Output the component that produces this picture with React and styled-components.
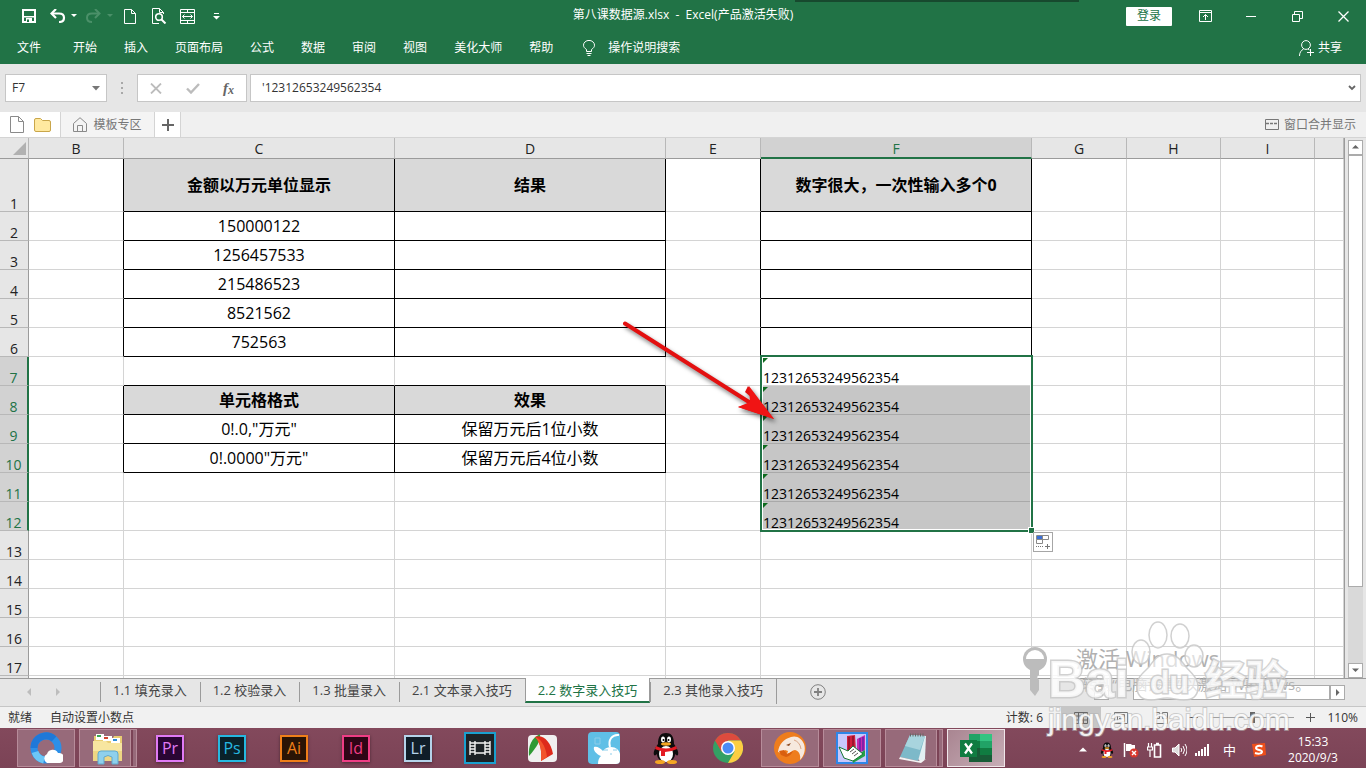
import styled, { createGlobalStyle, css } from "styled-components";

const columns = [
  { id: "B", width: 95 },
  { id: "C", width: 271 },
  { id: "D", width: 271 },
  { id: "E", width: 95 },
  { id: "F", width: 271, active: true },
  { id: "G", width: 95 },
  { id: "H", width: 94 },
  { id: "I", width: 94 },
  { id: "" },
];

const LONG_NUMBER = "12312653249562354";

const cells = {
  C1: "金额以万元单位显示",
  D1: "结果",
  F1: "数字很大，一次性输入多个0",
  C2: "150000122",
  C3: "1256457533",
  C4: "215486523",
  C5: "8521562",
  C6: "752563",
  C8: "单元格格式",
  D8: "效果",
  C9: '0!.0,"万元"',
  D9: "保留万元后1位小数",
  C10: '0!.0000"万元"',
  D10: "保留万元后4位小数",
};

const rows = Array.from({ length: 17 }, (_, i) => i + 1);
const ribbonTabs = ["开始", "插入", "页面布局", "公式", "数据", "审阅", "视图", "美化大师", "帮助"];
const sheets = [
  "1.1 填充录入",
  "1.2 校验录入",
  "1.3 批量录入",
  "2.1 文本录入技巧",
  "2.2 数字录入技巧",
  "2.3 其他录入技巧",
];
const activeSheet = 4;

// tables with black borders: C1:D6, C8:D10 and F1:F6
const isBoxed = (col, row) => {
  if (col === "C" || col === "D") return row <= 6 || (row >= 8 && row <= 10);
  return col === "F" && row <= 6;
};

const isSelected = (row) => row >= 7 && row <= 12;

function Cell({ index, row }) {
  const col = columns[index].id;
  const next = columns[index + 1]?.id;
  const selected = col === "F" && isSelected(row);
  return (
    <Td
      $head={isBoxed(col, row) && (row === 1 || row === 8)}
      $right={isBoxed(col, row) || isBoxed(next, row)}
      $bottom={isBoxed(col, row) || isBoxed(col, row + 1)}
      $selected={selected}
      $shaded={selected && row !== 7}
    >
      {selected ? LONG_NUMBER : cells[col + row]}
      {selected && row === 7 && (
        <Selection>
          <FillHandle />
          <PasteOptions aria-label="自动填充选项">
            <svg width="18" height="18" viewBox="0 0 18 18" fill="none">
              <path d="M2.500 2.500h12v4h-12zM8.500 2.500v4M2.500 6.500v4h6v-4" stroke="#888" />
              <path d="M3 3h5v3H3z" fill="#3c6fd6" />
              <path d="M2 13.500h7M2 15.500h0" stroke="#777" strokeDasharray="1 1" />
              <path d="M11 13.500h5M13.500 11v5" stroke="#777" />
            </svg>
          </PasteOptions>
        </Selection>
      )}
    </Td>
  );
}

function Grid() {
  return (
    <Table>
      <colgroup>
        <HeadCol />
        {columns.map((c) => (
          <Col key={c.id} $width={c.width} />
        ))}
      </colgroup>
      <thead>
        <tr>
          <ColHead aria-label="全选">
            <Corner width="14" height="14" viewBox="0 0 14 14">
              <path d="M14 0v13H1z" fill="#b1b1b1" />
            </Corner>
          </ColHead>
          {columns.map((c) => (
            <ColHead key={c.id} $active={c.active}>
              {c.id}
            </ColHead>
          ))}
        </tr>
      </thead>
      <tbody>
        {rows.map((row) => (
          <Row key={row} $tall={row === 1}>
            <RowHead $active={isSelected(row)}>{row}</RowHead>
            {columns.map((c, i) => (
              <Cell key={c.id} index={i} row={row} />
            ))}
          </Row>
        ))}
        <Row>
          <RowHead />
          {columns.map((c) => (
            <Td key={c.id} />
          ))}
        </Row>
      </tbody>
    </Table>
  );
}

function QuickAccess() {
  return (
    <QuickBar>
      <QuickButton aria-label="保存" $w={22}>
        <svg width="14" height="14" viewBox="0 0 14 14">
          <path d="M1 1h12v12H1z" fill="none" stroke="#fff" strokeWidth="2" />
          <path d="M1 7h12v1.500H1zM4 9h6v4H4z" fill="#fff" />
          <path d="M5 10.500h2V13H5z" fill="#217346" />
        </svg>
      </QuickButton>
      <QuickButton aria-label="撤消" $w={46}>
        <svg width="27" height="14" viewBox="0 0 27 14" fill="none">
          <path d="M2 4.500h7c3 0 5 1.600 5 4.200S12 13 9 13" stroke="#fff" strokeWidth="2.200" />
          <path d="M6 0 1.500 4.500 6 9" stroke="#fff" strokeWidth="2.200" />
          <path d="M21 5h6l-3 3z" fill="#fff" />
        </svg>
      </QuickButton>
      <QuickButton aria-label="恢复" $w={26}>
        <svg width="27" height="14" viewBox="0 0 27 14" fill="none">
          <path d="M13 4.500H6c-3 0-5 1.600-5 4.200S3 13 6 13" stroke="#4b9069" strokeWidth="2" />
          <path d="m9 0 4.500 4.500L9 9" stroke="#4b9069" strokeWidth="2" />
          <path d="M21 5h6l-3 3z" fill="#4b9069" />
        </svg>
      </QuickButton>
      <QuickButton aria-label="新建" $w={35}>
        <svg width="12" height="15" viewBox="0 0 12 15" fill="none" stroke="#fff">
          <path d="M.5.5h7l4 4v10H.5zM7.500.5v4h4" />
        </svg>
      </QuickButton>
      <QuickButton aria-label="打印预览" $w={25}>
        <svg width="15" height="16" viewBox="0 0 15 16" fill="none" stroke="#fff">
          <path d="M7 15.500H.5V.5h7l4 4V6M7.500.5v4h4" />
          <circle cx="7" cy="9" r="3.300" strokeWidth="1.600" />
          <path d="m9.500 11.500 4 4" strokeWidth="2" />
        </svg>
      </QuickButton>
      <QuickButton aria-label="表格" $w={31}>
        <svg width="15" height="15" viewBox="0 0 15 15" fill="none" stroke="#fff">
          <path d="M.5.5h14v14H.5zM.5 3.500h14M.5 11.500h14M7.500.5v3M7.500 11.500v3M2.500 7.500h10M4.500 5.500l-2 2 2 2M10.500 5.500l2 2-2 2" />
        </svg>
      </QuickButton>
      <QuickButton aria-label="自定义快速访问工具栏" $w={27}>
        <svg width="7" height="7" viewBox="0 0 7 7" fill="#fff">
          <path d="M1 0h5v1H1zM0 3h7L3.500 6.500z" />
        </svg>
      </QuickButton>
    </QuickBar>
  );
}

function Header() {
  return (
    <HeaderBar>
      <WindowEdge />
      <TitleRow>
        <QuickAccess />
        <Title>{"第八课数据源.xlsx  -  Excel(产品激活失败)"}</Title>
        <WindowButtons>
          <LoginButton>登录</LoginButton>
          <WindowButton aria-label="功能区显示选项">
            <svg width="13" height="12" viewBox="0 0 13 12" fill="none" stroke="#fff">
              <path d="M.5.5h12v11H.5zM.5 2.500h12M6.500 10V4.500M4 7l2.500-2.500L9 7" />
            </svg>
          </WindowButton>
          <WindowButton aria-label="最小化">
            <svg width="10" height="11" viewBox="0 0 10 11" stroke="#fff">
              <path d="M0 5.500h10" />
            </svg>
          </WindowButton>
          <WindowButton aria-label="向下还原">
            <svg width="11" height="11" viewBox="0 0 11 11" fill="none" stroke="#fff">
              <path d="M.5 3.500h7v7h-7zM2.500 3V.5h8v7H8" />
            </svg>
          </WindowButton>
          <WindowButton aria-label="关闭">
            <svg width="11" height="11" viewBox="0 0 11 11" stroke="#fff" strokeWidth="1.300">
              <path d="m.5.5 10 10M10.500.5l-10 10" />
            </svg>
          </WindowButton>
        </WindowButtons>
      </TitleRow>
      <RibbonRow>
        <RibbonTab $file>文件</RibbonTab>
        {ribbonTabs.map((t) => (
          <RibbonTab key={t}>{t}</RibbonTab>
        ))}
        <TellMe>
          <svg width="12" height="16" viewBox="0 0 12 16" fill="none" stroke="#fff">
            <path d="M3.500 11.500v-2C1.500 8 .5 7 .5 5.200a5.400 4.700 0 0 1 11 0c0 1.800-1 2.800-3 4.300v2zM3.500 13.500h5M4.500 15.500h3" />
          </svg>
          操作说明搜索
        </TellMe>
        <ShareButton>
          <svg width="15" height="16" viewBox="0 0 15 16" fill="none" stroke="#fff">
            <circle cx="7" cy="5" r="4.400" />
            <path d="M.5 16c0-3.500 1.500-5.500 4-7M9 9l1.500 1M8 12.500h7M11.500 9v7" />
          </svg>
          共享
        </ShareButton>
      </RibbonRow>
    </HeaderBar>
  );
}

function FormulaBar() {
  return (
    <FormulaRow>
      <NameBox>
        <NameInput aria-label="名称框" defaultValue="F7" />
        <PlainButton aria-label="名称列表">
          <svg width="8" height="5" viewBox="0 0 8 5" fill="#777">
            <path d="M0 0h8L4 4.500z" />
          </svg>
        </PlainButton>
      </NameBox>
      <Dots width="2" height="12" viewBox="0 0 2 12" fill="#a8a8a8">
        <path d="M0 0h2v2H0zM0 5h2v2H0zM0 10h2v2H0z" />
      </Dots>
      <FormulaTools>
        <PlainButton aria-label="取消">
          <svg width="12" height="11" viewBox="0 0 12 11" stroke="#bcbcbc" strokeWidth="1.800">
            <path d="m1 .5 10 10M11 .5 1 10.500" />
          </svg>
        </PlainButton>
        <PlainButton aria-label="输入">
          <svg width="14" height="11" viewBox="0 0 14 11" fill="none" stroke="#bcbcbc" strokeWidth="2.400">
            <path d="m1 5.500 4 4L13 1" />
          </svg>
        </PlainButton>
        <FxButton aria-label="插入函数">
          f<sub>x</sub>
        </FxButton>
      </FormulaTools>
      <FormulaField>
        <FormulaInput aria-label="编辑栏" defaultValue={"'" + LONG_NUMBER} />
        <PlainButton aria-label="展开编辑栏">
          <svg width="8" height="6" viewBox="0 0 8 6" fill="none" stroke="#666" strokeWidth="1.800">
            <path d="m1 1 3 3 3-3" />
          </svg>
        </PlainButton>
      </FormulaField>
    </FormulaRow>
  );
}

function DocStrip() {
  return (
    <Strip>
      <StripPart $bg="#fff" $w={61} $gap={10}>
        <svg width="14" height="17" viewBox="0 0 14 17" fill="#fff" stroke="#8a8a8a">
          <path d="M.5.5h8l5 5v11H.5zM8.500.5v5h5" />
        </svg>
        <svg width="17" height="14" viewBox="0 0 17 14" fill="#ffe9a0" stroke="#c9a64a">
          <path d="M.5 12V2Q.5.500 2 .5h4.500l2 2H15q1.500 0 1.500 1.500v8q0 1.500-1.500 1.500H2Q.5 13.500.5 12z" />
        </svg>
      </StripPart>
      <StripPart $bg="#f4f4f4" $w={94} $gap={6}>
        <svg width="14" height="15" viewBox="0 0 14 15" fill="none" stroke="#8a8a8a">
          <path d="M.5 6.500 7 .7l6.500 5.800v8H.5zM4.500 14.500v-6h5v6" />
        </svg>
        模板专区
      </StripPart>
      <StripPart $bg="#fff" $w={26}>
        <svg width="12" height="12" viewBox="0 0 12 12" stroke="#666" strokeWidth="2">
          <path d="M0 6h12M6 0v12" />
        </svg>
      </StripPart>
      <MergeView>
        <svg width="14" height="11" viewBox="0 0 14 11" fill="none" stroke="#777">
          <path d="M.5.5h13v10H.5z" />
          <path d="M1 4.500h12" strokeDasharray="3 1" strokeWidth="1.400" />
        </svg>
        窗口合并显示
      </MergeView>
    </Strip>
  );
}

function Arrow() {
  return (
    <ArrowDrawing width="170" height="116" viewBox="0 0 170 116">
      <path d="M8 8.500 132 87" stroke="#e31010" strokeWidth="4" strokeLinecap="round" />
      <path d="m157 104-36-12 13-4 1-5-7-6 3-6z" fill="#e31010" />
      <path d="m157 104-36-12 12-5-1-16z" fill="#f01414" />
    </ArrowDrawing>
  );
}

function Watermark() {
  return (
    <Mark width="290" height="125" viewBox="0 0 290 125">
      <circle cx="15" cy="41" r="12" fill="#bcbcbc" />
      <path d="M6 41a9 9 0 0 1 18 0z" fill="#fff" />
      <path d="M10 51h9v6l-2 2 2 3v10l-4 6-5-6z" fill="#bcbcbc" />
      <MarkText x="56" y="49" $size={22} fill="#b0b0b0">
        激活 Windows
      </MarkText>
      <MarkText x="62" y="72" $size={15} fill="#b2b2b2">
        转到“电脑设置”以激活 Windows。
      </MarkText>
      <g fill="#fff" fillOpacity=".6" stroke="#c8c8c8" strokeOpacity=".85" strokeWidth="1.500">
        <ellipse cx="138" cy="17" rx="9" ry="13" />
        <ellipse cx="160" cy="18" rx="9" ry="12" />
        <ellipse cx="121" cy="34" rx="9" ry="12" />
        <ellipse cx="174" cy="38" rx="9" ry="11" />
        <path d="M147 36c-9 0-14 7-18 13-7 7-12 10-12 20s6 13 14 13c7 0 9-2 16-2s9 2 17 2c9 0 14-4 14-13s-6-13-12-20c-5-7-10-13-19-13z" />
      </g>
      <g fill="#fff" fillOpacity=".8" stroke="#c6c6c6" strokeOpacity=".8">
        <LogoText x="28" y="79" $size={52}>Bai</LogoText>
        <LogoText x="130" y="75" $size={32}>du</LogoText>
        <LogoText x="185" y="77" $size={41}>经验</LogoText>
      </g>
      <UrlText x="28" y="112" fill="#fff" fillOpacity=".9" stroke="#b4b4b4" strokeOpacity=".6">
        jingyan.baidu.com
      </UrlText>
    </Mark>
  );
}

const arrowPaths = {
  up: "M0 4.500h7L3.500 1z",
  down: "M0 1.500h7L3.500 5z",
  left: "M5 0v7L1.500 3.500z",
  right: "M2 0v7l3.500-3.500z",
};

function ScrollArrow({ dir, label }) {
  return (
    <ScrollButton aria-label={label}>
      <svg width="7" height="7" viewBox="0 0 7 7" fill="#666">
        <path d={arrowPaths[dir]} />
      </svg>
    </ScrollButton>
  );
}

function SheetTabs() {
  return (
    <SheetBar>
      <SheetNav>
        <svg width="36" height="8" viewBox="0 0 36 8" fill="#bdbdbd">
          <path d="M5 0v8L1 4zM30 0v8l4-4z" />
        </svg>
      </SheetNav>
      {sheets.map((s, i) => (
        <SheetTab key={s} $active={i === activeSheet} $last={i === sheets.length - 1}>
          {s}
        </SheetTab>
      ))}
      <AddSheet aria-label="新工作表">
        <svg width="16" height="16" viewBox="0 0 16 16" fill="none" stroke="#808080">
          <circle cx="8" cy="8" r="7.300" />
          <path d="M4 8h8M8 4v8" strokeWidth="1.800" />
        </svg>
      </AddSheet>
      <HScroll>
        <ScrollArrow dir="left" label="向左滚动" />
        <HTrack>
          <HThumb />
        </HTrack>
        <ScrollArrow dir="right" label="向右滚动" />
      </HScroll>
    </SheetBar>
  );
}

function StatusBar() {
  return (
    <Status>
      <span>就绪</span>
      <span>自动设置小数点</span>
      <Count>计数: 6</Count>
      <Views>
        <ViewButton aria-label="普通" $active>
          <svg width="14" height="12" viewBox="0 0 14 12" fill="none" stroke="#666">
            <path d="M.5.5h13v11H.5zM.5 4h13M.5 8h13M4.500.5v11M9.500.5v11" />
          </svg>
        </ViewButton>
        <ViewButton aria-label="页面布局">
          <svg width="14" height="12" viewBox="0 0 14 12" fill="none" stroke="#777">
            <path d="M.5.5h13v11H.5zM3.500 2.500h7v7h-7zM5 4.500h4M5 6.500h4" />
          </svg>
        </ViewButton>
        <ViewButton aria-label="分页预览">
          <svg width="14" height="12" viewBox="0 0 14 12" fill="none" stroke="#777">
            <path d="M.5.5h5v6h-5zM8.500.5h5v6h-5zM.5 6.500v5h13v-5" />
          </svg>
        </ViewButton>
        <Zoom>
          <ZoomButton aria-label="缩小">
            <svg width="9" height="9" viewBox="0 0 9 9" stroke="#555">
              <path d="M0 4.500h9" />
            </svg>
          </ZoomButton>
          <ZoomRange type="range" aria-label="缩放" min="10" max="210" defaultValue="110" />
          <ZoomButton aria-label="放大">
            <svg width="9" height="9" viewBox="0 0 9 9" stroke="#555">
              <path d="M0 4.500h9M4.500 0v9" />
            </svg>
          </ZoomButton>
          <span>110%</span>
        </Zoom>
      </Views>
    </Status>
  );
}

function Penguin({ size }) {
  return (
    <svg width={size} height={size} viewBox="0 0 32 32">
      <path d="M8 12C8 4 11 1 16 1s8 3 8 11c3 4 5 8 4 11-1 1-2 0-3-1 0 4-3 8-9 8s-9-4-9-8c-1 1-2 2-3 1-1-3 1-7 4-11z" fill="#0d0d0d" />
      <ellipse cx="16" cy="22" rx="7" ry="8" fill="#fff" />
      <ellipse cx="10" cy="30" rx="5" ry="2" fill="#f5a623" />
      <ellipse cx="22" cy="30" rx="5" ry="2" fill="#f5a623" />
      <ellipse cx="13" cy="7.500" rx="2" ry="3" fill="#fff" />
      <ellipse cx="19" cy="7.500" rx="2" ry="3" fill="#fff" />
      <circle cx="13.500" cy="8" r="1" />
      <circle cx="18.500" cy="8" r="1" />
      <ellipse cx="16" cy="12" rx="5" ry="1.700" fill="#f5a623" />
      <path d="M6 14q10 5 20 0l1 3q-6 3-12 3v4h-4v-5q-4-1-6-2z" fill="#e31b23" />
    </svg>
  );
}

const taskApps = [
  {
    name: "QQ浏览器",
    open: true,
    icon: (
      <svg width="34" height="34" viewBox="0 0 34 34">
        <circle cx="17" cy="17" r="12" fill="none" stroke="#2b8fe8" strokeWidth="7" />
        <path d="M5 17a12 12 0 0 1 20-9" fill="none" stroke="#1f78d8" strokeWidth="7" />
        <path d="M6 21a12 12 0 0 0 9 8" fill="none" stroke="#6cc7f7" strokeWidth="7" />
        <path d="M18 32a5 5 0 0 1 0-9 6 6 0 0 1 11-1 5 5 0 0 1 2 10z" fill="#fff" />
      </svg>
    ),
  },
  {
    name: "文件资源管理器",
    open: true,
    stacked: true,
    icon: (
      <svg width="34" height="34" viewBox="0 0 34 34">
        <path d="M3 5h8l1 2h10l1-2h8v24H3z" fill="#e8cd72" />
        <path d="M5 3h8v6H5z" fill="#fff" />
        <path d="M6 4h4v2H6z" fill="#3aa655" />
        <path d="M12 5h9v5h-9z" fill="#fff" />
        <path d="M13 6h4v2h-4z" fill="#d2452f" />
        <path d="M20 7h9v5h-9z" fill="#fff" />
        <path d="M22 8h4v2h-4z" fill="#2e8fd6" />
        <path d="M2 10h13l2 2h14v18H2z" fill="#f7e6a0" />
        <path d="M2 20h29v10H2z" fill="#eed683" />
        <path d="M7 33V23q0-3 3-3h14q3 0 3 3v10h-6v-7q-4-3-8 0v7z" fill="#8fd0ec" stroke="#5fa9cf" />
      </svg>
    ),
  },
  { name: "Premiere", adobe: ["Pr", "#e07af5", "#2a0634"] },
  { name: "Photoshop", adobe: ["Ps", "#26b8e0", "#0a2129"] },
  { name: "Illustrator", adobe: ["Ai", "#ef7f1a", "#2a1405"] },
  { name: "InDesign", adobe: ["Id", "#ee3d85", "#2e0516"] },
  { name: "Lightroom", adobe: ["Lr", "#b4d3ea", "#0f1d28"] },
  {
    name: "视频工具",
    icon: (
      <svg width="32" height="32" viewBox="0 0 32 32">
        <path d="M1 1h30v30H1z" fill="#1d2226" stroke="#1aa0cf" strokeWidth="2" />
        <path d="M6 9v14M11 9v14M21 9v14M26 9v14M11 11h10M11 21h10M6 11h5M6 14h5M6 17h5M6 20h5M21 11h5M21 14h5M21 17h5M21 20h5" stroke="#f2f2f2" strokeWidth="1.400" fill="none" />
      </svg>
    ),
  },
  {
    name: "屏幕录像",
    icon: (
      <svg width="32" height="32" viewBox="0 0 32 32">
        <rect x="2" y="3" width="29" height="27" rx="4" fill="#f0f0f0" />
        <path d="M3 24C2 13 6 6 14 2c1 6-3 13-11 22z" fill="#2f9a35" />
        <path d="M9 5c8-3 16 5 18 17l-12 7C16 18 14 10 9 5z" fill="#de2a1b" />
        <path d="M9 5c5 1 11 9 12 20l-6 4C16 18 14 10 9 5z" fill="#f2542c" />
      </svg>
    ),
  },
  {
    name: "小兔助手",
    icon: (
      <svg width="32" height="32" viewBox="0 0 32 32">
        <rect width="32" height="32" rx="4" fill="#5fbfe6" />
        <path d="M10 32c0-4 1-6 3-8-5-2-8-6-7-9 3-1 6 1 9 4 2-3 5-4 8-4 5 0 8 3 9 7v6q0 4-4 4z" fill="#fff" />
        <path d="M22 15C20 8 24 2 31 3" stroke="#fff" strokeWidth="2" fill="none" />
        <path d="M16 18h4M25 18h4M22 22h2M7 6h5v6H7z" stroke="#8ccdea" fill="none" />
      </svg>
    ),
  },
  { name: "QQ", icon: <Penguin size={32} /> },
  {
    name: "Chrome",
    icon: (
      <svg width="30" height="30" viewBox="0 0 30 30">
        <circle cx="15" cy="15" r="15" fill="#34a064" />
        <path d="M2 7.500A15 15 0 0 1 28 7.500H15L8.500 18.800z" fill="#dd4b3e" />
        <path d="M28 7.500A15 15 0 0 1 15 30l6.500-11.200L15 7.500z" fill="#fcce42" />
        <circle cx="15" cy="15" r="7" fill="#fff" />
        <circle cx="15" cy="15" r="5.500" fill="#4c8bf5" />
      </svg>
    ),
  },
  {
    name: "猎豹浏览器",
    open: true,
    icon: (
      <svg width="32" height="32" viewBox="0 0 32 32">
        <circle cx="16" cy="16" r="16" fill="#ee7d1d" />
        <path d="M4 20c1-8 6-13 13-15 6-2 11 2 13 7 2 6 0 12-4 16 1-5-1-9-5-10-3 0-4 3-8 4l1-3-3-1-3 3z" fill="#f6e9de" />
        <path d="m5 19 5-1 3 4 6-3q-2 5-7 6l-5-2z" fill="#d95f0f" />
        <path d="m12 13 5-2-2 3z" fill="#8c4a20" />
        <path d="M20 8q6 2 7 9" stroke="#d9a585" fill="none" />
      </svg>
    ),
  },
  {
    name: "词典",
    open: true,
    icon: (
      <svg width="32" height="32" viewBox="0 0 32 32">
        <path d="M1 1h30v30H1z" fill="#c9c8fb" stroke="#2e86e8" strokeWidth="2" />
        <path d="m11 4 8-1 1 16-9 2z" fill="#d11f3d" />
        <path d="m21 7 8-4v15l-8 4z" fill="#c62bb1" />
        <path d="M13 5v14M17 4v14" stroke="#6e0b20" />
        <path d="M24 6v14M27 5v14" stroke="#3c1ba0" />
        <path d="m16 26 13-8v6l-12 7z" fill="#23a148" />
        <path d="m3 15 9 4 5-5 10 8-10 7-9-3z" fill="#fff" stroke="#187a35" />
        <path d="m14 20 4-3M16 22l4-3M18 24l4-3" stroke="#555" />
      </svg>
    ),
  },
  {
    name: "记事本",
    open: true,
    stacked: true,
    icon: (
      <svg width="32" height="32" viewBox="0 0 32 32">
        <path d="m12 3 16 1-1 23-4 3-3-3z" fill="#e3eef2" />
        <path d="M12 3 2 25l18 4 7-25z" fill="#7db9c9" />
        <path d="m12 3-5 11 15 4 5-14z" fill="#a8d4de" />
        <path d="m2 25 18 4 8-2-5 4-22-4z" fill="#f3f3f3" />
        <path d="M12 3h15" stroke="#666" strokeWidth="3" strokeDasharray="1 1.500" />
      </svg>
    ),
  },
  {
    name: "Excel",
    open: true,
    current: true,
    icon: (
      <svg width="32" height="30" viewBox="0 0 32 30">
        <path d="M9 1h12v7H9z" fill="#21a366" />
        <path d="M20 1h12v7H20z" fill="#33c481" />
        <path d="M9 8h12v7H9z" fill="#107c41" />
        <path d="M20 8h12v7H20z" fill="#21a366" />
        <path d="M9 15h12v7H9z" fill="#185c37" />
        <path d="M20 15h12v7H20z" fill="#107c41" />
        <path d="M9 22h23v7H9z" fill="#185c37" />
        <path d="M0 7h17v17H0z" fill="#107c41" />
        <path d="m5 10.500 7 10M12 10.500l-7 10" stroke="#fff" strokeWidth="2.200" />
      </svg>
    ),
  },
];

function Taskbar() {
  return (
    <TaskRow>
      <Apps>
        {taskApps.map((app) => (
          <TaskButton key={app.name} aria-label={app.name} $open={app.open} $current={app.current} $stacked={app.stacked}>
            {app.adobe ? (
              <AdobeTile $color={app.adobe[1]} $bg={app.adobe[2]}>
                {app.adobe[0]}
              </AdobeTile>
            ) : (
              app.icon
            )}
          </TaskButton>
        ))}
      </Apps>
      <Tray>
        <TrayIcon>
          <svg width="8" height="5" viewBox="0 0 8 5" fill="#fff">
            <path d="M0 4.500h8L4 .5z" />
          </svg>
        </TrayIcon>
        <TrayIcon>
          <Penguin size={16} />
        </TrayIcon>
        <TrayIcon>
          <svg width="16" height="16" viewBox="0 0 16 16">
            <path d="M1.500 1v14" stroke="#fff" strokeWidth="1.500" />
            <path d="M3 2h5l1 1h3v6H3z" fill="#fff" />
            <circle cx="11" cy="11" r="4.500" fill="#d9362c" />
            <path d="m9 9 4 4M13 9l-4 4" stroke="#fff" strokeWidth="1.400" />
          </svg>
        </TrayIcon>
        <TrayIcon>
          <svg width="16" height="16" viewBox="0 0 16 16" fill="none" stroke="#fff">
            <path d="M7.500 3h6v12h-6zM9 1.500h3" strokeWidth="1.600" />
            <path d="M1.500 1v4M4.500 1v4M.5 5h5v3h-5zM3 8v7" strokeWidth="1.200" />
          </svg>
        </TrayIcon>
        <TrayIcon>
          <svg width="15" height="14" viewBox="0 0 15 14" fill="none" stroke="#fff">
            <path d="M.5 5h2.500l4-4v12L3 9H.5z" fill="#ddd" />
            <path d="M9 5q1.500 2 0 4M11 3q3 4 0 8M13 1q4 6 0 12" />
          </svg>
        </TrayIcon>
        <TrayIcon>
          <svg width="16" height="12" viewBox="0 0 16 12" fill="#fff">
            <path d="M0 9h2v3H0zM3 7h2v5H3zM6 5h2v7H6zM9 3h2v9H9zM12 0h2v12h-2z" />
          </svg>
        </TrayIcon>
        <TrayIcon $wide>中</TrayIcon>
        <TrayIcon $wide>
          <svg width="16" height="16" viewBox="0 0 16 16">
            <path d="m1 2 13-1 1 12-12 2z" fill="#ee4f1b" />
            <path d="M11.500 4.500C8 3 5 4 5 6c0 2.500 6.500 1.500 6 4-.4 2-4 2-7 1" fill="none" stroke="#fff" strokeWidth="2" />
          </svg>
        </TrayIcon>
        <Clock>
          <span>15:33</span>
          <span>2020/9/3</span>
        </Clock>
      </Tray>
    </TaskRow>
  );
}

function App() {
  return (
    <Page>
      <GlobalStyle />
      <Header />
      <FormulaBar />
      <DocStrip />
      <SheetArea>
        <GridClip>
          <Grid />
        </GridClip>
        <VScroll>
          <ScrollArrow dir="up" label="向上滚动" />
          <VTrack>
            <VThumb />
          </VTrack>
          <ScrollArrow dir="down" label="向下滚动" />
        </VScroll>
        <Arrow />
      </SheetArea>
      <SheetTabs />
      <StatusBar />
      <Taskbar />
      <Watermark />
    </Page>
  );
}

const GlobalStyle = createGlobalStyle`
  * {
    box-sizing: border-box;
  }
  body {
    margin: 0;
    font-family: "Open Sans", "Noto Sans CJK SC", sans-serif;
    font-size: 12px;
    line-height: 16px;
    color: #333;
  }
  button, input {
    font: inherit;
    color: inherit;
    background: none;
    border: 0;
    padding: 0;
    margin: 0;
    outline: 0;
  }
  button {
    cursor: pointer;
    white-space: nowrap;
  }
  svg {
    display: block;
    flex: none;
  }
`;

const center = css`
  display: flex;
  align-items: center;
  justify-content: center;
`;

const Page = styled.div`
  position: relative;
  display: flex;
  flex-direction: column;
  height: 100vh;
  overflow: hidden;
`;

const HeaderBar = styled.header`
  position: relative;
  flex: none;
  background: #217346;
  color: #fff;
`;

// shadow that the window above drops on the top edge
const WindowEdge = styled.div`
  position: absolute;
  top: 0;
  right: 287px;
  width: 284px;
  height: 2px;
  background: #17492e;
`;

const TitleRow = styled.div`
  display: grid;
  grid-template-columns: 1fr auto 1fr;
  height: 32px;
`;

const QuickBar = styled.div`
  display: flex;
  align-items: center;
  padding-left: 18px;
`;

const QuickButton = styled.button`
  ${center}
  width: ${(p) => p.$w}px;
  height: 32px;
`;

const Title = styled.div`
  line-height: 30px;
  white-space: pre;
`;

const WindowButtons = styled.div`
  display: flex;
  justify-content: flex-end;
  align-items: center;
`;

const LoginButton = styled.button`
  width: 46px;
  height: 19px;
  margin-right: 10px;
  border-radius: 1px;
  background: #fff;
  color: #217346;
`;

const WindowButton = styled.button`
  ${center}
  width: 46px;
  height: 30px;
`;

const RibbonRow = styled.nav`
  display: flex;
  align-items: center;
  gap: 27px;
  height: 32px;
  padding: 0 24px 0 17px;
`;

const RibbonTab = styled.button`
  margin-right: ${(p) => (p.$file ? 5 : 0)}px;
`;

const TellMe = styled.button`
  display: flex;
  align-items: center;
  gap: 13px;
  margin-left: 3px;
`;

const ShareButton = styled.button`
  display: flex;
  align-items: center;
  gap: 4px;
  margin-left: auto;
`;

const FormulaRow = styled.div`
  flex: none;
  display: flex;
  align-items: center;
  height: 48px;
  padding: 0 5px;
  background: #e6e6e6;
`;

const box = css`
  display: flex;
  align-items: center;
  height: 28px;
  border: 1px solid #c6c6c6;
  background: #fff;
`;

const NameBox = styled.div`
  ${box}
  width: 102px;
  padding: 0 6px;
`;

const NameInput = styled.input`
  flex: 1;
  min-width: 0;
`;

const PlainButton = styled.button`
  ${center}
  height: 26px;
`;

const Dots = styled.svg`
  margin: 0 14px;
`;

const FormulaTools = styled.div`
  ${box}
  width: 110px;
  justify-content: space-between;
  padding: 0 12px;
`;

const FxButton = styled.button`
  font-family: "Liberation Serif", serif;
  font-style: italic;
  font-weight: 700;
  font-size: 15px;
  color: #666;
  sub {
    font-size: 12px;
    line-height: 1px;
    vertical-align: -1px;
  }
`;

const FormulaField = styled.div`
  ${box}
  flex: 1;
  margin-left: 3px;
  padding: 0 4px 0 11px;
`;

const FormulaInput = styled.input`
  flex: 1;
`;

const Strip = styled.div`
  flex: none;
  display: flex;
  height: 26px;
  border-bottom: 1px solid #d4d4d4;
  background: #f0f0f0;
  color: #777;
`;

const StripPart = styled.div`
  ${center}
  gap: ${(p) => p.$gap || 0}px;
  width: ${(p) => p.$w}px;
  border-right: 1px solid #d4d4d4;
  background: ${(p) => p.$bg};
`;

const MergeView = styled.button`
  display: flex;
  align-items: center;
  gap: 5px;
  margin-left: auto;
  padding-right: 10px;
`;

const SheetArea = styled.main`
  position: relative;
  flex: 1;
  display: flex;
  min-height: 0;
`;

const GridClip = styled.div`
  flex: 1;
  overflow: hidden;
  border-right: 1px solid #9b9b9b;
`;

const Table = styled.table`
  width: 100%;
  table-layout: fixed;
  border-collapse: separate;
  border-spacing: 0;
  background: #fff;
`;

const HeadCol = styled.col`
  width: 29px;
`;

const Col = styled.col`
  width: ${(p) => (p.$width ? p.$width + "px" : "auto")};
`;

const ColHead = styled.th`
  height: 21px;
  padding: 2px 0 0;
  border-right: 1px solid #b8b8b8;
  border-bottom: ${(p) => (p.$active ? "2px solid #217346" : "1px solid #9b9b9b")};
  background: ${(p) => (p.$active ? "#d2d2d2" : "#e6e6e6")};
  color: ${(p) => (p.$active ? "#217346" : "#222")};
  font-size: 14px;
  font-weight: 400;
`;

const Corner = styled.svg`
  margin: 0 2px 0 auto;
`;

const Row = styled.tr`
  height: ${(p) => (p.$tall ? 53 : 29)}px;
`;

const RowHead = styled.th`
  padding: 0;
  border-bottom: 1px solid #b8b8b8;
  border-right: ${(p) => (p.$active ? "2px solid #217346" : "1px solid #9b9b9b")};
  background: ${(p) => (p.$active ? "#d2d2d2" : "#e6e6e6")};
  color: ${(p) => (p.$active ? "#217346" : "#222")};
  font-size: 14px;
  font-weight: 400;
  line-height: 14px;
  vertical-align: bottom;
`;

const Td = styled.td`
  padding: 0;
  border-right: 1px solid ${(p) => (p.$right ? "#000" : "#d4d4d4")};
  border-bottom: 1px solid ${(p) => (p.$bottom ? "#000" : "#d4d4d4")};
  background: ${(p) => (p.$head ? "#d9d9d9" : "#fff")};
  color: #000;
  font-size: 16px;
  font-weight: ${(p) => (p.$head ? 700 : 400)};
  line-height: 20px;
  text-align: center;
  ${(p) =>
    p.$selected &&
    css`
      position: relative;
      padding-left: 2px;
      font-size: 14px;
      line-height: 14px;
      text-align: left;
      vertical-align: bottom;
      &::before {
        content: "";
        position: absolute;
        top: 1px;
        left: 1px;
        width: 6px;
        height: 6px;
        background: #0e6b1e;
        clip-path: polygon(0 0, 100% 0, 0 100%);
      }
    `}
  ${(p) =>
    p.$shaded &&
    css`
      background: #c6c6c6;
      border-bottom-color: #a9a9a9;
    `}
`;

const Selection = styled.div`
  position: absolute;
  z-index: 1;
  top: -2px;
  left: -1px;
  right: -2px;
  height: 177px;
  border: 2px solid #217346;
  box-shadow: inset 0 0 0 1px #fff;
`;

const FillHandle = styled.div`
  position: absolute;
  right: -4px;
  bottom: -4px;
  width: 7px;
  height: 7px;
  border: 1px solid #fff;
  background: #217346;
`;

const PasteOptions = styled.button`
  position: absolute;
  top: 100%;
  left: 100%;
  margin: 2px;
  width: 20px;
  height: 20px;
  border: 1px solid #a6a6a6;
  background: #fff;
`;

const ArrowDrawing = styled.svg`
  position: absolute;
  z-index: 2;
  top: 177px;
  left: 617px;
  pointer-events: none;
  filter: drop-shadow(2px 3px 2px rgba(0, 0, 0, 0.5));
`;

const VScroll = styled.div`
  flex: none;
  display: flex;
  flex-direction: column;
  width: 21px;
  padding: 2px 3px 0;
  background: #e6e6e6;
`;

const ScrollButton = styled.button`
  ${center}
  flex: none;
  width: 15px;
  height: 15px;
  border: 1px solid #ababab;
  background: #fff;
`;

const VTrack = styled.div`
  flex: 1;
  width: 15px;
  background: #d9d9d9;
`;

const VThumb = styled.div`
  height: 85%;
  border: 1px solid #ababab;
  background: #fff;
`;

const SheetBar = styled.div`
  flex: none;
  display: flex;
  height: 28px;
  border-top: 1px solid #9b9b9b;
  background: #e6e6e6;
`;

const SheetNav = styled.div`
  ${center}
  width: 88px;
  height: 25px;
  margin-right: 12px;
`;

const SheetTab = styled.button`
  position: relative;
  height: 25px;
  padding: 0 13px 4px;
  font-size: 13px;
  color: #444;
  border-right: ${(p) => (p.$last ? "1px solid #9b9b9b" : 0)};
  &::before {
    content: "";
    position: absolute;
    top: 3px;
    bottom: 2px;
    left: 0;
    width: 1px;
    background: #9b9b9b;
  }
  ${(p) =>
    p.$active &&
    css`
      margin-top: -1px;
      padding: 0 12px;
      border: 1px solid #9b9b9b;
      border-top: 0;
      border-bottom: 2px solid #217346;
      background: #fff;
      color: #217346;
      &::before,
      & + &::before {
        display: none;
      }
    `}
`;

const AddSheet = styled.button`
  ${center}
  width: 40px;
  height: 26px;
  margin-left: 21px;
`;

const HScroll = styled.div`
  display: flex;
  align-items: center;
  width: 251px;
  height: 26px;
  margin: 0 21px 0 auto;
`;

const HTrack = styled.div`
  flex: 1;
  display: flex;
  justify-content: flex-end;
  height: 15px;
`;

const HThumb = styled.div`
  width: 197px;
  border: 1px solid #ababab;
  background: #fff;
`;

const Status = styled.footer`
  flex: none;
  display: flex;
  align-items: center;
  gap: 18px;
  height: 22px;
  padding: 0 8px;
  border-top: 1px solid #c6c6c6;
  background: #f1f1f1;
`;

const Count = styled.span`
  margin-left: auto;
`;

const Views = styled.div`
  display: flex;
  align-items: center;
`;

const ViewButton = styled.button`
  ${center}
  width: 40px;
  height: 21px;
  background: ${(p) => (p.$active ? "#c6c6c6" : "none")};
`;

const Zoom = styled.div`
  display: flex;
  align-items: center;
  gap: 12px;
  width: 177px;
  padding-left: 8px;
`;

const ZoomButton = styled.button`
  ${center}
  width: 9px;
`;

const ZoomRange = styled.input`
  flex: 1;
  min-width: 0;
  height: 16px;
  appearance: none;
  &::-webkit-slider-runnable-track {
    height: 11px;
    background: linear-gradient(#a0a0a0, #a0a0a0) center / 100% 1px no-repeat;
  }
  &::-webkit-slider-thumb {
    appearance: none;
    width: 5px;
    height: 11px;
    background: #666;
  }
`;

const TaskRow = styled.div`
  flex: none;
  display: flex;
  justify-content: space-between;
  height: 40px;
  background: linear-gradient(#83495c, #7b4356);
  color: #fff;
`;

const Apps = styled.div`
  display: flex;
  gap: 4px;
  padding: 1px 0 1px 17px;
`;

const TaskButton = styled.button`
  ${center}
  position: relative;
  width: 58px;
  height: 38px;
  border: 1px solid transparent;
  ${(p) =>
    p.$open &&
    css`
      border-color: #b78c9a;
      background: #976a7a;
    `}
  ${(p) =>
    p.$current &&
    css`
      border-color: #f0e6ea;
      background: linear-gradient(135deg, #a98591, #c7adb6);
    `}
  ${(p) =>
    p.$stacked &&
    css`
      &::after {
        content: "";
        position: absolute;
        top: 0;
        bottom: 0;
        right: 3px;
        width: 2px;
        border-left: 1px solid #b78c9a;
        background: #7b4356;
      }
    `}
`;

const AdobeTile = styled.span`
  ${center}
  width: 28px;
  height: 27px;
  border: 2px solid ${(p) => p.$color};
  background: ${(p) => p.$bg};
  color: ${(p) => p.$color};
  font-size: 16px;
  font-weight: 500;
  box-shadow: 0 1px 3px rgba(0, 0, 0, 0.4);
`;

const Tray = styled.div`
  display: flex;
  align-items: center;
  padding: 3px 13px 0 0;
`;

const TrayIcon = styled.span`
  ${center}
  width: ${(p) => (p.$wide ? 29 : 24)}px;
  font-size: 13px;
`;

const Clock = styled.time`
  display: flex;
  flex-direction: column;
  align-items: center;
  width: 80px;
`;

const Mark = styled.svg`
  position: absolute;
  z-index: 3;
  right: 56px;
  bottom: 25px;
  pointer-events: none;
`;

const MarkText = styled.text`
  font-size: ${(p) => p.$size}px;
`;

const LogoText = styled.text`
  font-family: "Liberation Sans", "Noto Sans CJK SC", sans-serif;
  font-size: ${(p) => p.$size}px;
  font-weight: 700;
  stroke-width: 3px;
  paint-order: stroke;
`;

const UrlText = styled.text`
  font-family: "Liberation Sans", sans-serif;
  font-size: 30px;
  stroke-width: 2px;
  paint-order: stroke;
`;

export default App;
